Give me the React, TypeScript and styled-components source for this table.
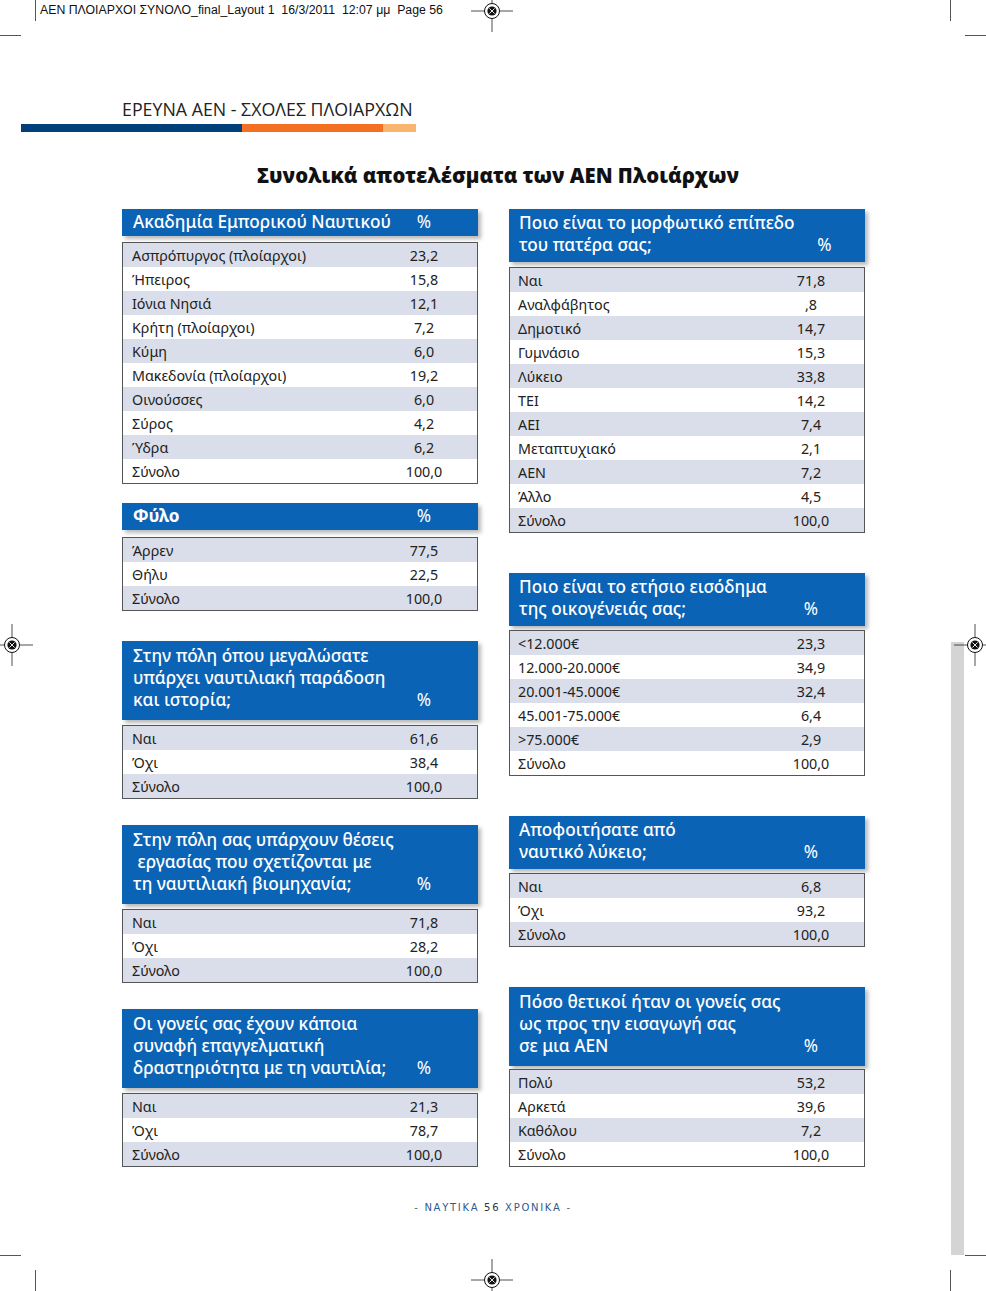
import React from "react";
import styled, { createGlobalStyle } from "styled-components";

const Global = createGlobalStyle`
  html, body { margin: 0; padding: 0; background: #fff; }
  body { font-family: "Noto Sans", "Open Sans", sans-serif; color: #222; }
`;

const Page = styled.div`
  position: relative;
  width: 986px;
  min-height: 1291px;
  overflow: hidden;
  background: #fff;
`;

const Marks = styled.svg`
  position: absolute;
  inset: 0;
  pointer-events: none;
`;

const Slug = styled.div`
  padding: 2px 0 0 40px;
  height: 18px;
  font-family: "Liberation Sans", Arial, sans-serif;
  font-size: 12.3px;
  line-height: 16px;
  color: #111;
  white-space: pre;
`;

const SectionTitle = styled.div`
  margin: 77px 0 0 122px;
  font-family: "Open Sans", "Noto Sans", sans-serif;
  font-size: 17.8px;
  line-height: 24px;
  color: #222;
`;

const ColorBar = styled.div`
  display: flex;
  margin: 3px 0 0 21px;
  height: 8px;
`;

const BarSeg = styled.div<{ $w: number; $c: string }>`
  width: ${(p) => p.$w}px;
  background: ${(p) => p.$c};
`;

const MainTitle = styled.h1`
  margin: 30px 0 0 0;
  text-align: center;
  padding-left: 10px;
  font-family: "Open Sans", "Noto Sans", sans-serif;
  font-weight: 800;
  font-size: 20.3px;
  line-height: 26px;
  color: #111;
`;

const Columns = styled.div`
  display: grid;
  grid-template-columns: 356px 356px;
  column-gap: 31px;
  margin: 21px 0 0 122px;
  align-items: start;
`;

const Column = styled.div`
  display: flex;
  flex-direction: column;
`;

const Block = styled.section<{ $top: number }>`
  margin-top: ${(p) => p.$top}px;
`;

const pads = ["2px 24px 3px", "3px 24px 6px", "4px 24px 9px"];

const Header = styled.div<{ $lines: number; $pl: number; $after: number; $bold?: boolean }>`
  display: grid;
  grid-template-columns: 1fr 60px;
  align-items: end;
  background: #0b63b5;
  color: #fff;
  padding: ${(p) => pads[p.$lines - 1]};
  padding-left: ${(p) => p.$pl}px;
  margin-bottom: ${(p) => p.$after}px;
  font-size: 17.2px;
  font-weight: ${(p) => (p.$bold ? 700 : 500)};
  line-height: 22px;
  box-shadow: 3px 3px 4px rgba(0, 0, 0, 0.28);
`;

const HeaderText = styled.div`
  white-space: pre;
`;

const Pct = styled.div`
  text-align: center;
  font-weight: 400;
`;

const Table = styled.div`
  border: 1px solid #555;
  box-shadow: inset 0 0 0 1px #e6e6e6;
`;

const Row = styled.div<{ $shade: boolean; $pl: number }>`
  display: grid;
  grid-template-columns: 1fr 60px;
  height: 24px;
  align-items: center;
  padding: 0 23px 0 ${(p) => p.$pl}px;
  background: ${(p) => (p.$shade ? "#d9deea" : "#fff")};
  font-size: 14.3px;
  color: #222;
`;

const Value = styled.div`
  text-align: center;
`;

const Footer = styled.div`
  position: absolute;
  left: 0;
  right: 0;
  top: 1202px;
  text-align: center;
  font-family: "DejaVu Sans", "Noto Sans", sans-serif;
  font-size: 10px;
  letter-spacing: 1.7px;
  color: #666;
`;

const FooterWord = styled.span<{ $dark?: boolean }>`
  color: ${(p) => (p.$dark ? "#333" : "#2f5a8f")};
`;

type Tbl = {
  title: string[];
  bold?: boolean;
  top: number;
  after: number;
  rows: [string, string][];
};

const left: Tbl[] = [
  {
    title: ["Ακαδημία Εμπορικού Ναυτικού"],
    top: 0,
    after: 6,
    rows: [
      ["Ασπρόπυργος (πλοίαρχοι)", "23,2"],
      ["Ήπειρος", "15,8"],
      ["Ιόνια Νησιά", "12,1"],
      ["Κρήτη (πλοίαρχοι)", "7,2"],
      ["Κύμη", "6,0"],
      ["Μακεδονία (πλοίαρχοι)", "19,2"],
      ["Οινούσσες", "6,0"],
      ["Σύρος", "4,2"],
      ["Ύδρα", "6,2"],
      ["Σύνολο", "100,0"],
    ],
  },
  {
    title: ["Φύλο"],
    bold: true,
    top: 19,
    after: 7,
    rows: [
      ["Άρρεν", "77,5"],
      ["Θήλυ", "22,5"],
      ["Σύνολο", "100,0"],
    ],
  },
  {
    title: ["Στην πόλη όπου μεγαλώσατε", "υπάρχει ναυτιλιακή παράδοση", "και ιστορία;"],
    top: 30,
    after: 5,
    rows: [
      ["Ναι", "61,6"],
      ["Όχι", "38,4"],
      ["Σύνολο", "100,0"],
    ],
  },
  {
    title: ["Στην πόλη σας υπάρχουν θέσεις", " εργασίας που σχετίζονται με", "τη ναυτιλιακή βιομηχανία;"],
    top: 26,
    after: 5,
    rows: [
      ["Ναι", "71,8"],
      ["Όχι", "28,2"],
      ["Σύνολο", "100,0"],
    ],
  },
  {
    title: ["Οι γονείς σας έχουν κάποια", "συναφή επαγγελματική", "δραστηριότητα με τη ναυτιλία;"],
    top: 26,
    after: 5,
    rows: [
      ["Ναι", "21,3"],
      ["Όχι", "78,7"],
      ["Σύνολο", "100,0"],
    ],
  },
];

const right: Tbl[] = [
  {
    title: ["Ποιο είναι το μορφωτικό επίπεδο", "του πατέρα σας;"],
    top: 0,
    after: 5,
    rows: [
      ["Ναι", "71,8"],
      ["Αναλφάβητος", ",8"],
      ["Δημοτικό", "14,7"],
      ["Γυμνάσιο", "15,3"],
      ["Λύκειο", "33,8"],
      ["ΤΕΙ", "14,2"],
      ["ΑΕΙ", "7,4"],
      ["Μεταπτυχιακό", "2,1"],
      ["ΑΕΝ", "7,2"],
      ["Άλλο", "4,5"],
      ["Σύνολο", "100,0"],
    ],
  },
  {
    title: ["Ποιο είναι το ετήσιο εισόδημα", "της οικογένειάς σας;"],
    top: 40,
    after: 4,
    rows: [
      ["<12.000€", "23,3"],
      ["12.000-20.000€", "34,9"],
      ["20.001-45.000€", "32,4"],
      ["45.001-75.000€", "6,4"],
      [">75.000€", "2,9"],
      ["Σύνολο", "100,0"],
    ],
  },
  {
    title: ["Αποφοιτήσατε από", "ναυτικό λύκειο;"],
    top: 40,
    after: 4,
    rows: [
      ["Ναι", "6,8"],
      ["Όχι", "93,2"],
      ["Σύνολο", "100,0"],
    ],
  },
  {
    title: ["Πόσο θετικοί ήταν οι γονείς σας", "ως προς την εισαγωγή σας", "σε μια ΑΕΝ"],
    top: 40,
    after: 3,
    rows: [
      ["Πολύ", "53,2"],
      ["Αρκετά", "39,6"],
      ["Καθόλου", "7,2"],
      ["Σύνολο", "100,0"],
    ],
  },
];

function DataBlock({ t, pl }: { t: Tbl; pl: number }) {
  return (
    <Block $top={t.top}>
      <Header $lines={t.title.length} $pl={pl + 1} $after={t.after} $bold={t.bold}>
        <HeaderText>{t.title.join("\n")}</HeaderText>
        <Pct>%</Pct>
      </Header>
      <Table>
        {t.rows.map(([label, val], i) => (
          <Row key={i} $shade={i % 2 === 0} $pl={pl - 1}>
            <span>{label}</span>
            <Value>{val}</Value>
          </Row>
        ))}
      </Table>
    </Block>
  );
}

function Reg({ x, y }: { x: number; y: number }) {
  return (
    <g transform={`translate(${x} ${y})`}>
      <line x1={-21} y1={0} x2={21} y2={0} stroke="#222" strokeWidth={0.8} />
      <line x1={0} y1={-21} x2={0} y2={21} stroke="#222" strokeWidth={0.8} />
      <circle r={7.5} fill="#fff" stroke="#111" strokeWidth={1} />
      <circle r={4.6} fill="#111" />
      <line x1={-2.6} y1={-2.6} x2={2.6} y2={2.6} stroke="#fff" strokeWidth={0.9} />
      <line x1={-2.6} y1={2.6} x2={2.6} y2={-2.6} stroke="#fff" strokeWidth={0.9} />
    </g>
  );
}

export default function App() {
  return (
    <Page>
      <Global />
      <Slug>{"ΑΕΝ ΠΛΟΙΑΡΧΟΙ ΣΥΝΟΛΟ_final_Layout 1  16/3/2011  12:07 μμ  Page 56"}</Slug>
      <SectionTitle>ΕΡΕΥΝΑ ΑΕΝ - ΣΧΟΛΕΣ ΠΛΟΙΑΡΧΩΝ</SectionTitle>
      <ColorBar>
        <BarSeg $w={221} $c="#003f78" />
        <BarSeg $w={141} $c="#f36f21" />
        <BarSeg $w={33} $c="#f9b46f" />
      </ColorBar>
      <MainTitle>Συνολικά αποτελέσματα των ΑΕΝ Πλοιάρχων</MainTitle>
      <Columns>
        <Column>
          {left.map((t, i) => (
            <DataBlock key={i} t={t} pl={10} />
          ))}
        </Column>
        <Column>
          {right.map((t, i) => (
            <DataBlock key={i} t={t} pl={9} />
          ))}
        </Column>
      </Columns>
      <Footer>
        - <FooterWord>ΝΑΥΤΙΚΑ</FooterWord> <FooterWord $dark>56</FooterWord>{" "}
        <FooterWord>ΧΡΟΝΙΚΑ</FooterWord> -
      </Footer>
      <Marks width={986} height={1291} viewBox="0 0 986 1291">
        <rect x={951} y={642} width={13} height={613} fill="#d4d4d4" />
        <g stroke="#555" strokeWidth={1}>
          <line x1={35.5} y1={0} x2={35.5} y2={21} />
          <line x1={0} y1={35.5} x2={21} y2={35.5} />
          <line x1={950.5} y1={0} x2={950.5} y2={21} />
          <line x1={965} y1={35.5} x2={986} y2={35.5} />
          <line x1={35.5} y1={1270} x2={35.5} y2={1291} />
          <line x1={0} y1={1255.5} x2={21} y2={1255.5} />
          <line x1={950.5} y1={1270} x2={950.5} y2={1291} />
          <line x1={965} y1={1255.5} x2={986} y2={1255.5} />
        </g>
        <Reg x={492} y={11} />
        <Reg x={12} y={645} />
        <Reg x={975} y={645} />
        <Reg x={492} y={1280} />
      </Marks>
    </Page>
  );
}
